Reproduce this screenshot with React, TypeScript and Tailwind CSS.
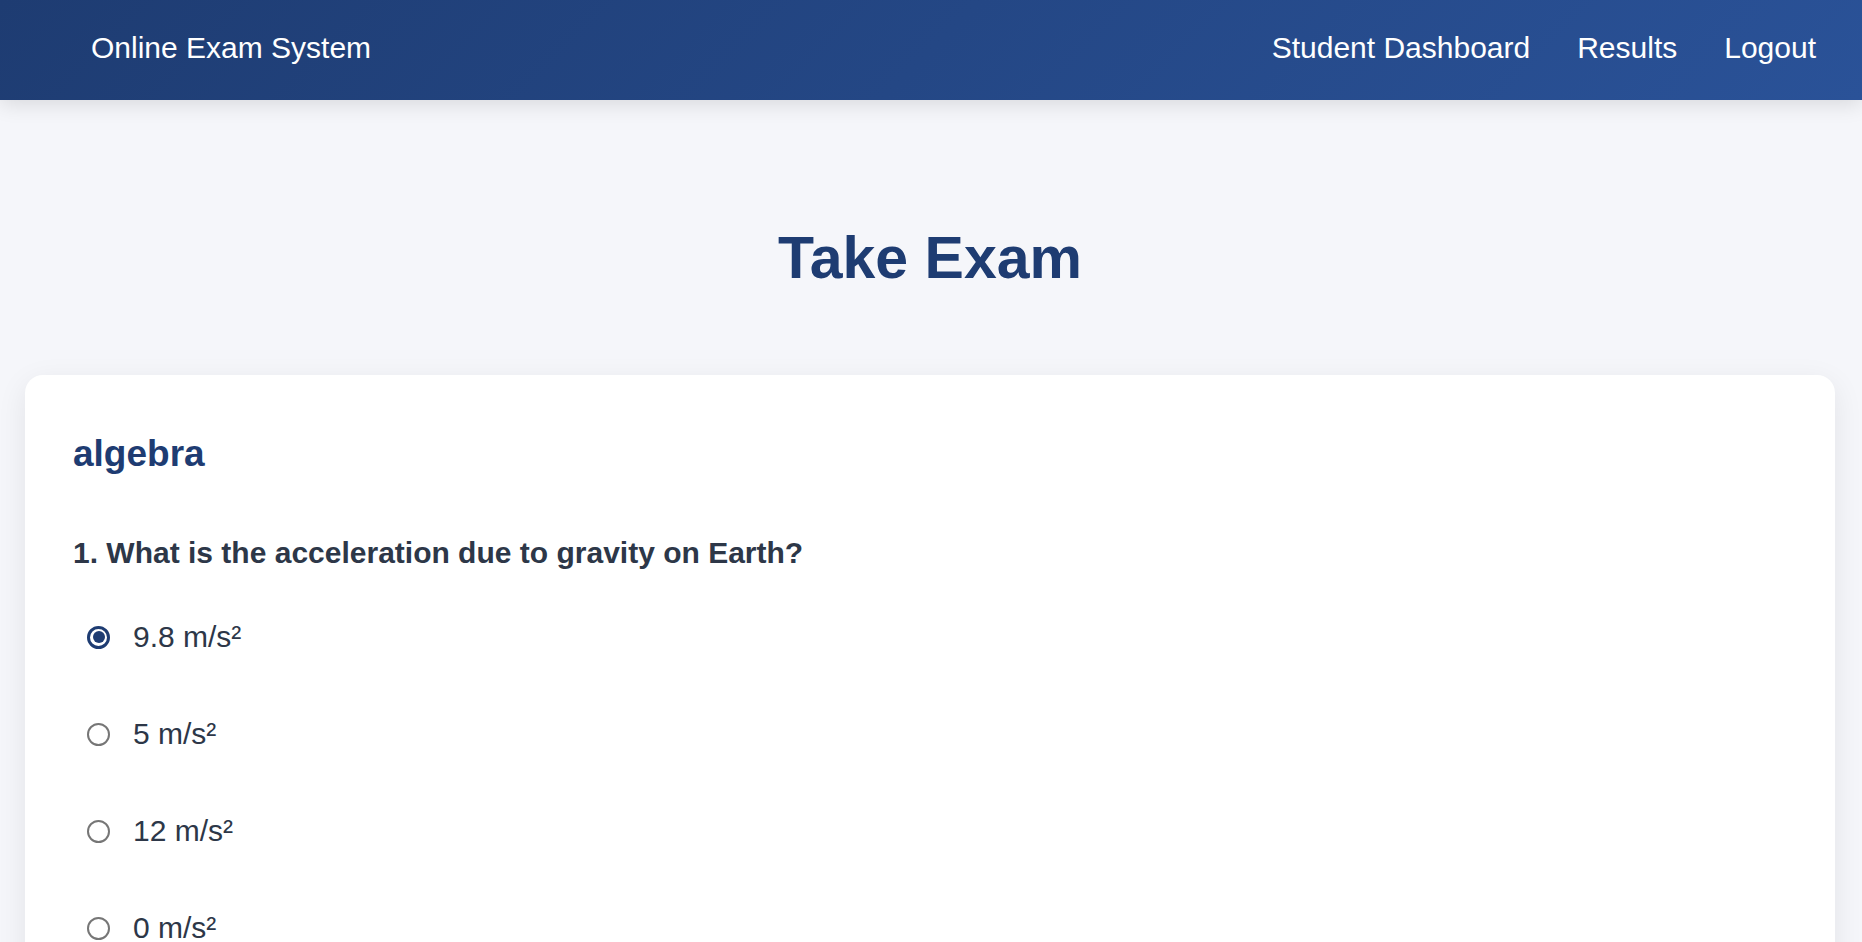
import React, { useState } from "react";

const options = ["9.8 m/s²", "5 m/s²", "12 m/s²", "0 m/s²"];

export default function App() {
  const [selected, setSelected] = useState(0);
  return (
    <div
      className="min-h-screen bg-[#f5f6fa] text-[#2d3748]"
      style={{ fontFamily: '"Liberation Sans", Arial, sans-serif' }}
    >
      <header className="relative z-10 flex h-[100px] items-center justify-between bg-[linear-gradient(135deg,#1e3c72,#2a5298)] pb-[5px] pl-[91px] pr-[46px] text-white shadow-[0_4px_20px_rgba(0,0,0,0.12)]">
        <div className="text-[30px] leading-none">Online Exam System</div>
        <nav className="flex items-center gap-[47px] text-[30px] leading-none">
          <a href="#">Student Dashboard</a>
          <a href="#">Results</a>
          <a href="#">Logout</a>
        </nav>
      </header>

      <main className="pl-[25px] pr-[27px]">
        <h1 className="pt-[129px] text-center text-[59px] font-bold leading-none text-[#1e3c72]">
          Take Exam
        </h1>

        <section className="mt-[87px] rounded-[18px] bg-white px-[48px] pt-[60px] pb-[60px] shadow-[0_8px_30px_rgba(0,0,0,0.08)]">
          <h2 className="text-[37px] font-bold leading-none text-[#1e3c72]">algebra</h2>
          <div className="mt-[66px]">
            <p className="text-[30px] font-bold leading-none text-[#2d3748]">
              1. What is the acceleration due to gravity on Earth?
            </p>
            <div className="mt-[54px] flex flex-col gap-[67px]">
              {options.map((o, i) => (
                <label
                  key={o}
                  className="flex h-[30px] cursor-pointer items-center"
                  onClick={() => setSelected(i)}
                >
                  <span
                    className={
                      i === selected
                        ? "ml-[14px] flex h-[23px] w-[23px] items-center justify-center rounded-full border-[3px] border-[#1e3c72] bg-white"
                        : "ml-[14px] flex h-[23px] w-[23px] items-center justify-center rounded-full border-2 border-[#767676] bg-white"
                    }
                  >
                    {i === selected && <span className="h-[12px] w-[12px] rounded-full bg-[#1e3c72]" />}
                  </span>
                  <span className="ml-[23px] text-[30px] leading-none text-[#2d3748]">{o}</span>
                </label>
              ))}
            </div>
          </div>
        </section>
      </main>
    </div>
  );
}
